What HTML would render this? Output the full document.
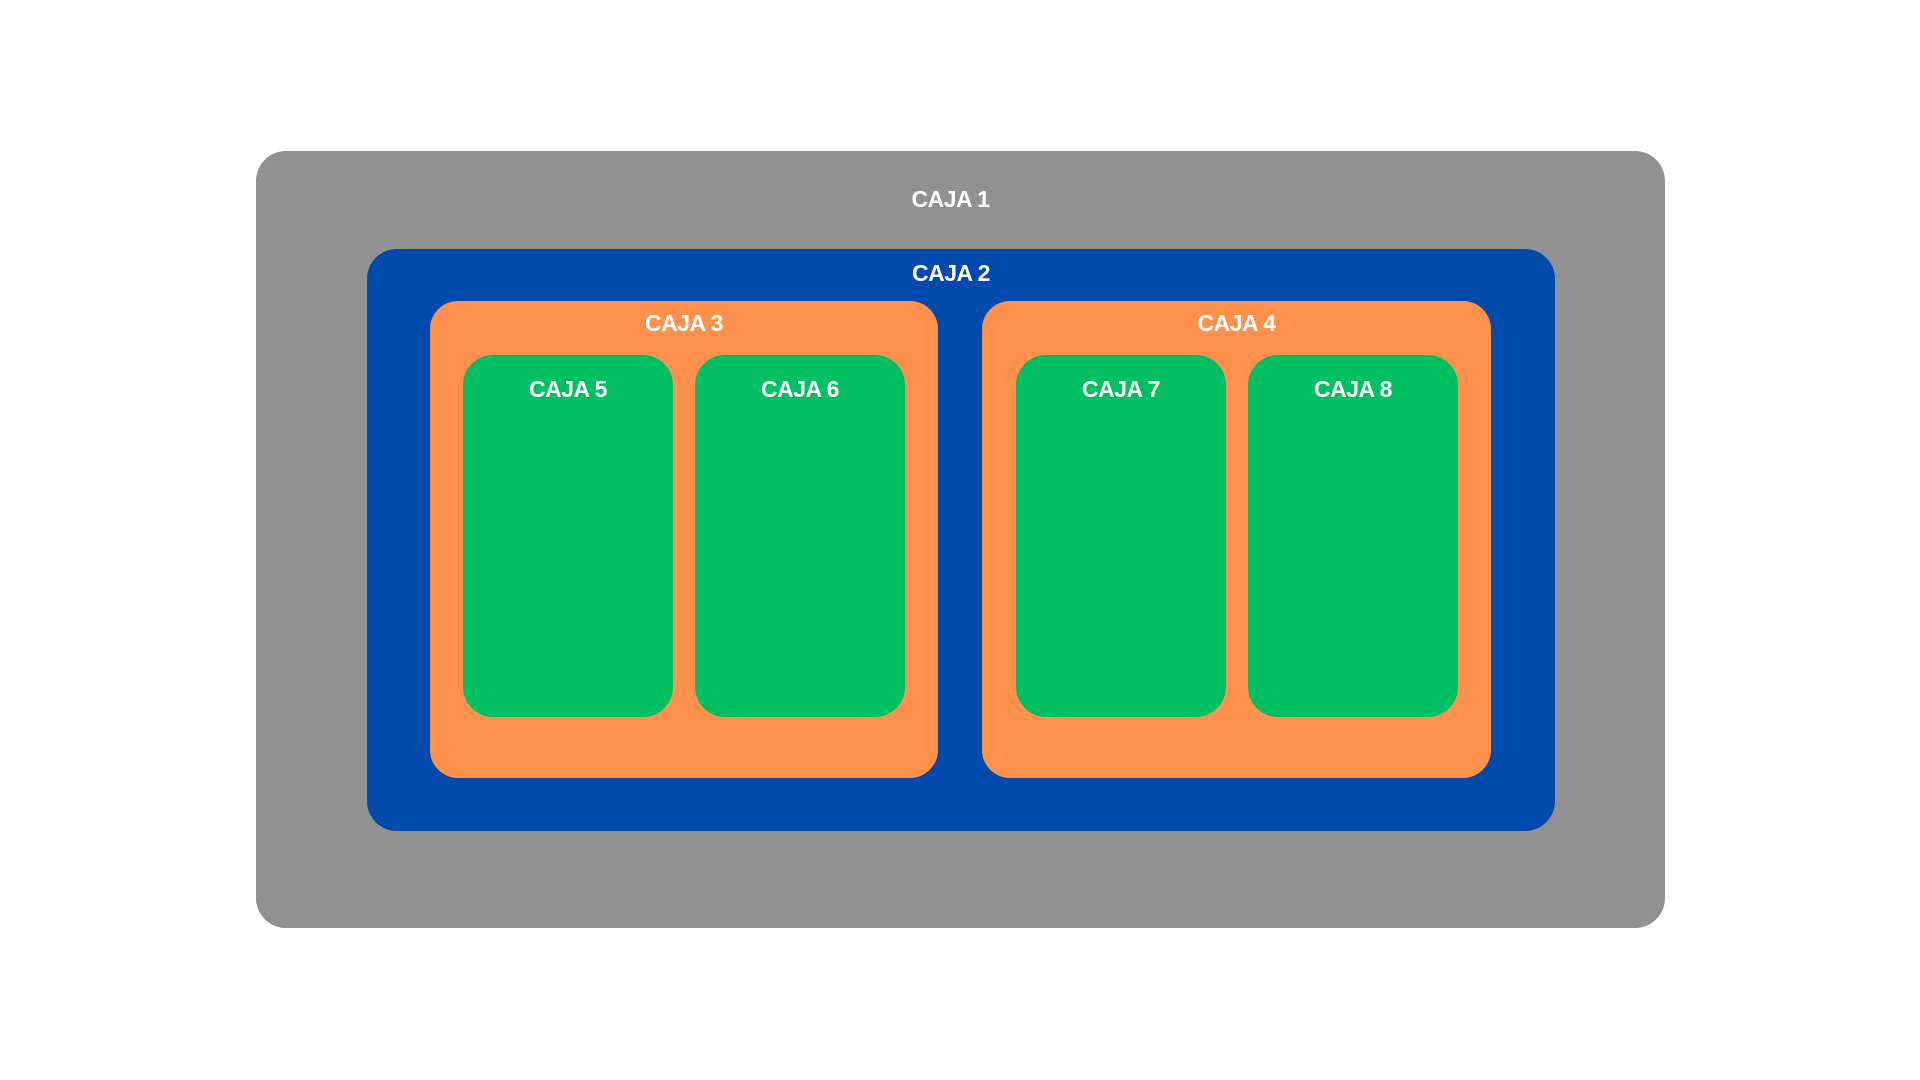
<!DOCTYPE html>
<html><head><meta charset="utf-8"><style>
html,body{margin:0;padding:0;background:#fff;width:1920px;height:1080px;overflow:hidden}
.b{position:absolute;border-radius:30px}
.t{position:absolute;left:0;right:0;text-align:center;color:#fff;font-family:"Liberation Sans",sans-serif;font-weight:bold;font-size:23px;letter-spacing:-0.5px;line-height:30px}
.g{background:#919191}.bl{background:#004AAD}.o{background:#FF914D;border-radius:28px}.gr{background:#00BF63}
</style></head><body>
<div class="b g" style="left:256px;top:151px;width:1409px;height:777px"><div class="t" style="top:33px;right:20px">CAJA 1</div></div>
<div class="b bl" style="left:367px;top:249px;width:1188px;height:582px"><div class="t" style="top:9px;right:20px">CAJA 2</div></div>
<div class="b o" style="left:430px;top:301px;width:508px;height:477px"><div class="t" style="top:7px">CAJA 3</div></div>
<div class="b o" style="left:982px;top:301px;width:509px;height:477px"><div class="t" style="top:7px">CAJA 4</div></div>
<div class="b gr" style="left:463px;top:355px;width:210px;height:362px"><div class="t" style="top:19px">CAJA 5</div></div>
<div class="b gr" style="left:695px;top:355px;width:210px;height:362px"><div class="t" style="top:19px">CAJA 6</div></div>
<div class="b gr" style="left:1016px;top:355px;width:210px;height:362px"><div class="t" style="top:19px">CAJA 7</div></div>
<div class="b gr" style="left:1248px;top:355px;width:210px;height:362px"><div class="t" style="top:19px">CAJA 8</div></div>
</body></html>
